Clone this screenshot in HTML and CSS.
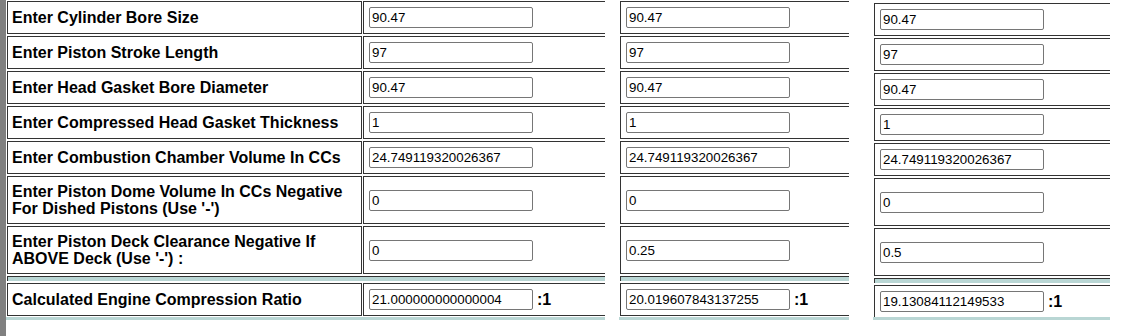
FILE: index.html
```html
<!DOCTYPE html>
<html lang="en">
<head>
  <meta charset="UTF-8" />
  <title>Compression Ratio Calculator</title>
  <link rel="stylesheet" href="styles.css">
</head>
<body>
  <div class="frame">
    <div class="edge"></div>

    <div class="panel panel-main">
      <table class="calc">
        <tr>
          <td><div class="label">Enter Cylinder Bore Size</div></td>
          <td><div class="field"><input type="text" value="90.47"></div></td>
        </tr>
        <tr>
          <td><div class="label">Enter Piston Stroke Length</div></td>
          <td><div class="field"><input type="text" value="97"></div></td>
        </tr>
        <tr>
          <td><div class="label">Enter Head Gasket Bore Diameter</div></td>
          <td><div class="field"><input type="text" value="90.47"></div></td>
        </tr>
        <tr>
          <td><div class="label">Enter Compressed Head Gasket Thickness</div></td>
          <td><div class="field"><input type="text" value="1"></div></td>
        </tr>
        <tr>
          <td><div class="label">Enter Combustion Chamber Volume In CCs</div></td>
          <td><div class="field"><input type="text" value="24.749119320026367"></div></td>
        </tr>
        <tr>
          <td><div class="label tall">Enter Piston Dome Volume In CCs Negative For Dished Pistons (Use '-')</div></td>
          <td><div class="field tall"><input type="text" value="0"></div></td>
        </tr>
        <tr>
          <td><div class="label tall">Enter Piston Deck Clearance Negative If ABOVE Deck (Use '-') :</div></td>
          <td><div class="field tall"><input type="text" value="0"></div></td>
        </tr>
        <tr class="sep"><td colspan="2"><div></div></td></tr>
        <tr>
          <td><div class="label">Calculated Engine Compression Ratio</div></td>
          <td><div class="field"><input type="text" value="21.000000000000004"><span class="ratio">:1</span></div></td>
        </tr>
      </table>
    </div>

    <div class="panel panel-two">
      <table class="calc">
        <tr><td><div class="field"><input type="text" value="90.47"></div></td></tr>
        <tr><td><div class="field"><input type="text" value="97"></div></td></tr>
        <tr><td><div class="field"><input type="text" value="90.47"></div></td></tr>
        <tr><td><div class="field"><input type="text" value="1"></div></td></tr>
        <tr><td><div class="field"><input type="text" value="24.749119320026367"></div></td></tr>
        <tr><td><div class="field tall"><input type="text" value="0"></div></td></tr>
        <tr><td><div class="field tall"><input type="text" value="0.25"></div></td></tr>
        <tr class="sep"><td><div></div></td></tr>
        <tr><td><div class="field"><input type="text" value="20.019607843137255"><span class="ratio">:1</span></div></td></tr>
      </table>
    </div>

    <div class="panel panel-three">
      <table class="calc">
        <tr><td><div class="field"><input type="text" value="90.47"></div></td></tr>
        <tr><td><div class="field"><input type="text" value="97"></div></td></tr>
        <tr><td><div class="field"><input type="text" value="90.47"></div></td></tr>
        <tr><td><div class="field"><input type="text" value="1"></div></td></tr>
        <tr><td><div class="field"><input type="text" value="24.749119320026367"></div></td></tr>
        <tr><td><div class="field tall"><input type="text" value="0"></div></td></tr>
        <tr><td><div class="field tall"><input type="text" value="0.5"></div></td></tr>
        <tr class="sep"><td><div></div></td></tr>
        <tr><td><div class="field"><input type="text" value="19.13084112149533"><span class="ratio">:1</span></div></td></tr>
      </table>
    </div>
  </div>
</body>
</html>
```

FILE: styles.css
```css
body {
  margin: 0;
  background: #fff;
  color: #000;
  font-family: "Liberation Sans", Arial, sans-serif;
}
.frame {
  display: flex;
  align-items: flex-start;
  height: 336px;
}
.edge {
  width: 6px;
  height: 336px;
  background: #808080;
  flex-shrink: 0;
}
.panel {
  height: 317px;
  overflow: hidden;
  border-bottom: 3px solid #b9d6d4;
  flex-shrink: 0;
}
.panel-main {
  width: 599px;
}
.panel-two {
  width: 230px;
  margin-left: 14px;
}
.panel-three {
  width: 237px;
  margin-left: 24px;
}
.calc {
  border-collapse: separate;
  border-spacing: 1px 2px;
  margin-top: -1px;
}
.panel-three .calc {
  margin-top: 1px;
}
.calc td {
  border: 1px solid #333;
  padding: 0;
}
.label {
  width: 349px;
  height: 31px;
  padding-left: 4px;
  display: flex;
  align-items: center;
  font-weight: bold;
  font-size: 16px;
  line-height: 17px;
}
.field {
  width: 300px;
  height: 31px;
  padding-left: 5px;
  display: flex;
  align-items: center;
}
.tall {
  height: 46px;
}
.field input {
  box-sizing: border-box;
  width: 164px;
  height: 21px;
  margin: 0;
  padding: 0 2px;
  border: 1px solid #767676;
  border-radius: 2px;
  font-family: "Liberation Sans", Arial, sans-serif;
  font-size: 13.333px;
  color: #000;
  background: #fff;
}
.ratio {
  margin-left: 4px;
  font-weight: bold;
  font-size: 16px;
}
.calc .sep td {
  border-right: none;
  border-bottom: none;
  background: #b9d6d4;
}
.sep div {
  height: 4px;
}
```
